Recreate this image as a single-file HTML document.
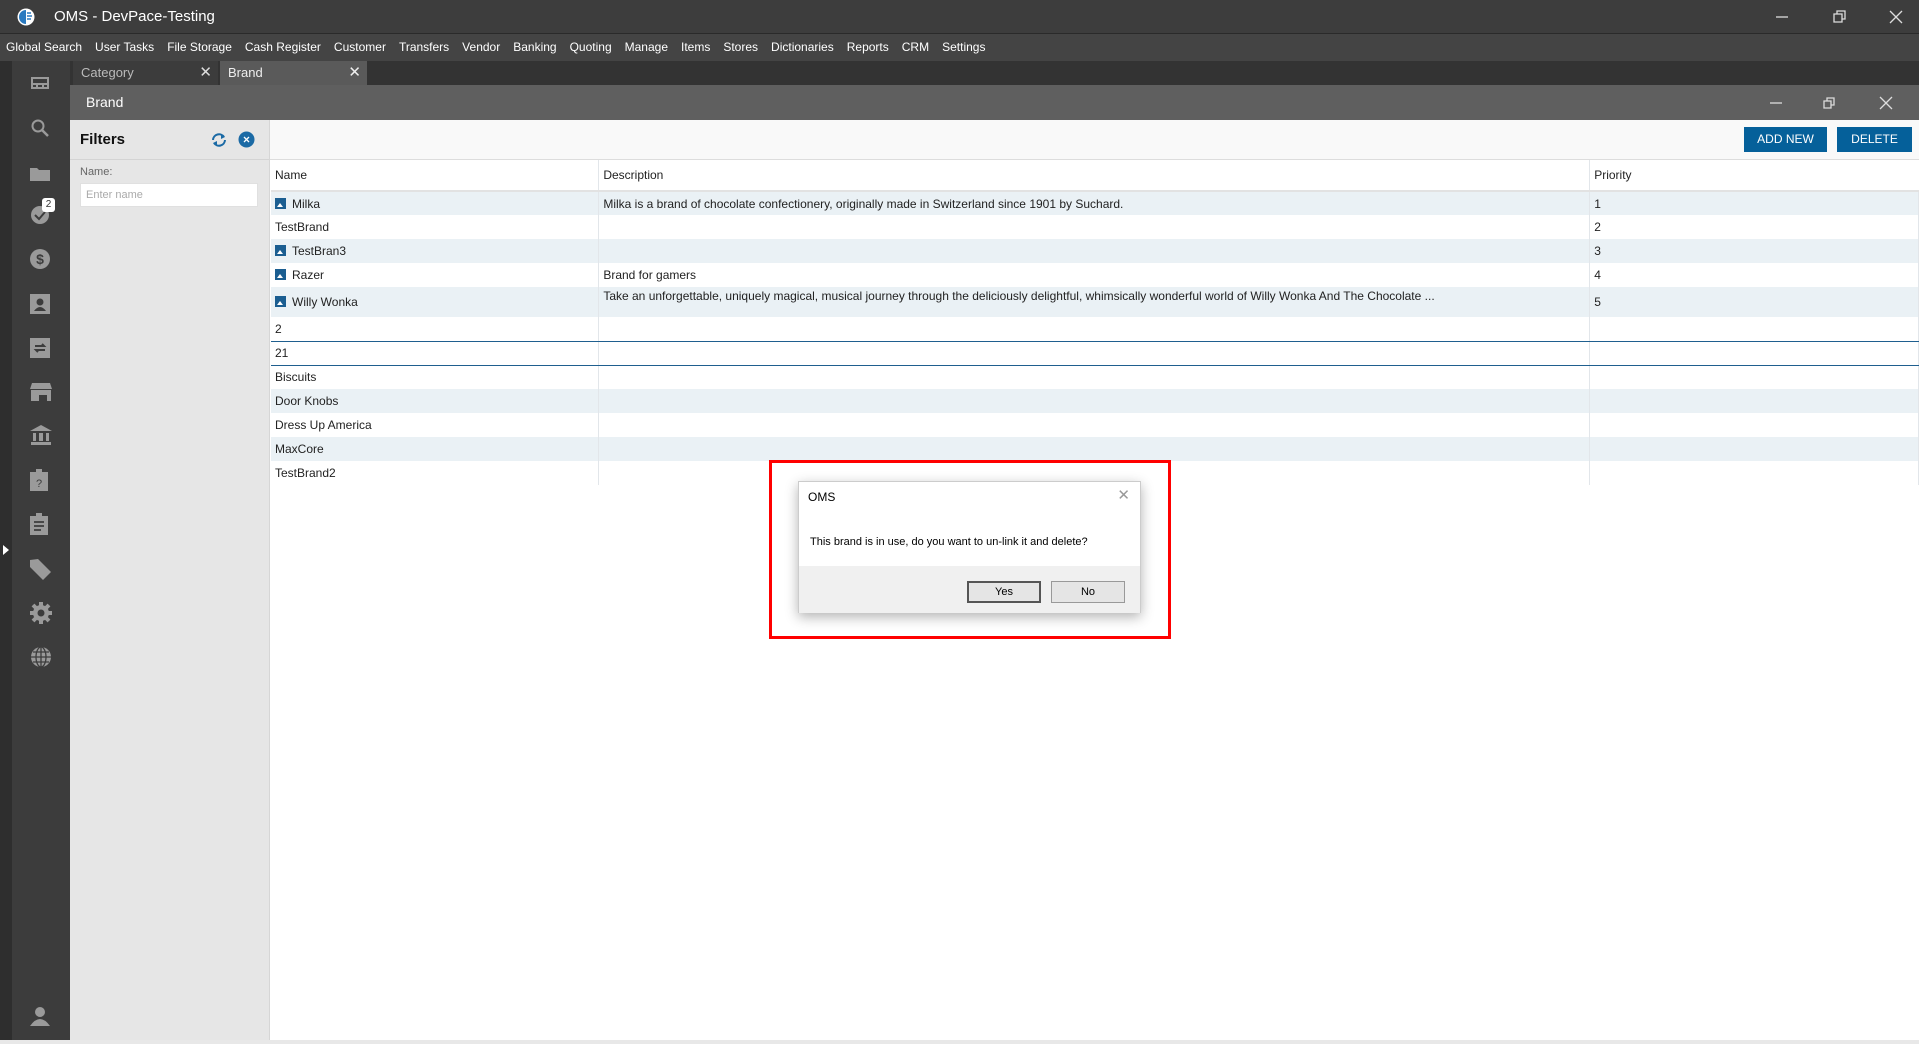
<!DOCTYPE html>
<html><head><meta charset="utf-8"><style>
*{margin:0;padding:0;box-sizing:border-box}
body{width:1919px;height:1044px;overflow:hidden;background:#fff;font-family:"Liberation Sans",sans-serif;position:relative}
.abs{position:absolute}
.title{left:0;top:0;width:1919px;height:34px;background:#3d3d3d;border-bottom:1px solid #2a2a2a;color:#fff;font-size:15px}
.menu{left:0;top:34px;width:1919px;height:27px;background:#444;color:#fff;font-size:12px;line-height:27px;white-space:nowrap;padding-left:6px;word-spacing:0}
.menu span{margin-right:13px}
.side0{left:0;top:61px;width:12px;height:979px;background:#2e2e2e}
.side{left:12px;top:61px;width:58px;height:979px;background:#3c3c3c}
.tabs{left:70px;top:61px;width:1849px;height:24px;background:#333}
.tab{top:0;height:24px;color:#ddd;font-size:13px;line-height:24px;padding-left:8px}
.hdr{left:70px;top:85px;width:1849px;height:35px;background:#5f5f5f;color:#fff;font-size:14px;line-height:35px;padding-left:16px}
.filt{left:70px;top:120px;width:200px;height:920px;background:#e6e6e6;border-right:1px solid #d6d6d6}
.tool{left:270px;top:120px;width:1649px;height:40px;background:#f9f9f9;border-bottom:1px solid #ddd}
.btn{top:127px;height:25px;background:#05609a;color:#fff;font-size:12px;line-height:25px;text-align:center}
table{position:absolute;left:271px;top:160px;border-collapse:collapse;font-size:12px;color:#222}
td{height:24px;padding-left:4px;border-right:1px solid #e2e6ea;white-space:nowrap;vertical-align:middle}
tr.h td{height:31px;border-bottom:2px solid #e2e2e2;background:#fff}
tr.s td{background:#eaf1f5}
.ic{display:inline-block;width:11px;height:11px;background:#1b5e91;margin-right:6px;vertical-align:-1px;position:relative}
.ic:after{content:"";position:absolute;left:2px;bottom:2px;border-left:3px solid transparent;border-right:3px solid transparent;border-bottom:4px solid #fff}
svg.i{position:absolute;left:18px;fill:#9a9a9a}
</style></head><body>
<div class="abs title">
<svg class="abs" style="left:17px;top:8px" width="18" height="18" viewBox="0 0 18 18"><circle cx="9" cy="9" r="8.5" fill="#fff"/><path d="M9 2a7 7 0 0 0 0 14z" fill="#2a7ac0"/><path d="M10 5h4M10 8h5M10 11h4" stroke="#2a7ac0" stroke-width="1.5"/></svg>
<span class="abs" style="left:54px;top:8px">OMS - DevPace-Testing</span>
<svg class="abs" style="left:1776px;top:10px" width="140" height="14"><path d="M0 7h12" stroke="#ddd" stroke-width="1.3"/><path d="M58 4h8v8h-8zM61 4v-3h8v8h-3" stroke="#ddd" fill="none" stroke-width="1.3"/><path d="M114 1l12 12M126 1l-12 12" stroke="#ddd" stroke-width="1.3"/></svg>
</div>
<div class="abs menu"><span>Global Search</span><span>User Tasks</span><span>File Storage</span><span>Cash Register</span><span>Customer</span><span>Transfers</span><span>Vendor</span><span>Banking</span><span>Quoting</span><span>Manage</span><span>Items</span><span>Stores</span><span>Dictionaries</span><span>Reports</span><span>CRM</span><span>Settings</span></div>
<div class="abs side0"></div>
<div class="abs side">
<svg class="i" style="top:15px" width="20" height="14"><path d="M1 1h18v12H1z M3 3v4h14V3z M3 9v2h3V9z M8 9v2h4V9z M14 9v2h3V9z" fill-rule="evenodd"/></svg>
<svg class="i" style="top:57px" width="20" height="20"><circle cx="8" cy="8" r="5.5" fill="none" stroke="#9a9a9a" stroke-width="2"/><path d="M12 12l6 6" stroke="#9a9a9a" stroke-width="2.5"/></svg>
<svg class="i" style="top:104px" width="20" height="16"><path d="M0 3h7l2 2h11v11H0z"/></svg>
<svg class="i" style="top:142px" width="22" height="22"><circle cx="10" cy="12" r="9"/><path d="M5 12l4 4 6-7" stroke="#3c3c3c" stroke-width="2" fill="none"/></svg>
<div class="abs" style="left:30px;top:137px;width:13px;height:14px;background:#fff;border-radius:3px;font-size:10px;color:#333;text-align:center;line-height:14px">2</div>
<svg class="i" style="top:188px" width="20" height="20"><circle cx="10" cy="10" r="10"/><text x="10" y="15" font-size="14" font-weight="bold" text-anchor="middle" fill="#3c3c3c" font-family="Liberation Sans">$</text></svg>
<svg class="i" style="top:233px" width="20" height="20"><path d="M0 0h20v20H0z"/><circle cx="10" cy="8" r="3.5" fill="#3c3c3c"/><path d="M4 17q6-8 12 0z" fill="#3c3c3c"/></svg>
<svg class="i" style="top:277px" width="20" height="20"><path d="M0 0h20v20H0z"/><path d="M5 8h9l-2-2M15 12H6l2 2" stroke="#3c3c3c" stroke-width="2" fill="none"/></svg>
<svg class="i" style="top:322px" width="22" height="18"><path d="M2 0h18l2 6H0z M1 7h20v11h-4v-6H9v6H1z"/></svg>
<svg class="i" style="top:364px" width="22" height="20"><path d="M11 0l11 6H0z M1 17h20v3H1z M3 8h3v8H3z M9 8h4v8H9z M16 8h3v8h-3z"/></svg>
<svg class="i" style="top:408px" width="18" height="22"><path d="M0 3h6v-3h6v3h6v19H0z"/><text x="9" y="18" font-size="11" text-anchor="middle" fill="#3c3c3c" font-family="Liberation Sans">?</text></svg>
<svg class="i" style="top:452px" width="18" height="22"><path d="M0 3h6v-3h6v3h6v19H0z"/><path d="M4 9h10M4 13h10M4 17h7" stroke="#3c3c3c" stroke-width="1.8"/></svg>
<svg class="i" style="top:497px" width="22" height="22"><path d="M0 2v7l13 13 8-8L8 1z"/></svg>
<svg class="i" style="top:541px" width="22" height="22"><circle cx="11" cy="11" r="8"/><path d="M11 0v22M0 11h22M3 3l16 16M19 3L3 19" stroke="#9a9a9a" stroke-width="4"/><circle cx="11" cy="11" r="3.5" fill="#3c3c3c"/></svg>
<svg class="i" style="top:585px" width="22" height="22"><circle cx="11" cy="11" r="10"/><path d="M1 11h20M11 1v20M3 6h16M3 16h16" stroke="#3c3c3c" stroke-width="1.3" fill="none"/><ellipse cx="11" cy="11" rx="5" ry="10" stroke="#3c3c3c" stroke-width="1.3" fill="none"/></svg>
<svg class="i" style="top:945px" width="20" height="20"><circle cx="10" cy="6" r="5"/><path d="M0 20q10-14 20 0z"/></svg>
</div>
<svg class="abs" style="left:3px;top:545px" width="6" height="10"><path d="M0 0l6 5-6 5z" fill="#fff"/></svg>
<div class="abs tabs">
<div class="abs tab" style="left:3px;width:145px;background:#3c3c3c;color:#bbb">Category<span class="abs" style="right:6px;top:0;color:#ddd;font-size:15px">✕</span></div>
<div class="abs tab" style="left:150px;width:147px;background:#5a5a5a;color:#eee">Brand<span class="abs" style="right:6px;top:0;color:#eee;font-size:15px">✕</span></div>
</div>
<div class="abs hdr">Brand
<svg class="abs" style="left:1700px;top:11px" width="140" height="14"><path d="M0 7h12" stroke="#ddd" stroke-width="1.3"/><path d="M54 5h7v7h-7zM57 5v-3h7v7h-3" stroke="#ddd" fill="none" stroke-width="1.3"/><path d="M110 1l12 12M122 1l-12 12" stroke="#ddd" stroke-width="1.3"/></svg>
</div>
<div class="abs filt">
<div class="abs" style="left:0;top:0;width:199px;height:40px;border-bottom:1px solid #d4d4d4"></div>
<div class="abs" style="left:10px;top:11px;font-size:15px;font-weight:bold;color:#111">Filters</div>
<svg class="abs" style="left:140px;top:12px" width="18" height="16"><path d="M3 8a6 6 0 0 1 11-3M15 8a6 6 0 0 1-11 3" stroke="#1b6aa5" stroke-width="2" fill="none"/><path d="M11 2l4 3-4 2zM7 14l-4-3 4-2z" fill="#1b6aa5"/></svg>
<svg class="abs" style="left:168px;top:11px" width="17" height="17"><circle cx="8.5" cy="8.5" r="8" fill="#1b6aa5"/><path d="M6 6l5 5M11 6l-5 5" stroke="#fff" stroke-width="1.3"/></svg>
<div class="abs" style="left:10px;top:46px;font-size:11px;color:#666">Name:</div>
<div class="abs" style="left:10px;top:63px;width:178px;height:24px;background:#fff;border:1px solid #e0e0e0;font-size:11px;color:#aaa;line-height:22px;padding-left:5px">Enter name</div>
</div>
<div class="abs tool"></div>
<div class="abs btn" style="left:1744px;width:83px">ADD NEW</div>
<div class="abs btn" style="left:1837px;width:75px">DELETE</div>
<table>
<tr class="h"><td style="width:328px">Name</td><td style="width:991px">Description</td><td style="width:329px;border-right:0">Priority</td></tr>
<tr class="s"><td><span class="ic"></span>Milka</td><td>Milka is a brand of chocolate confectionery, originally made in Switzerland since 1901 by Suchard.</td><td>1</td></tr>
<tr><td>TestBrand</td><td></td><td>2</td></tr>
<tr class="s"><td><span class="ic"></span>TestBran3</td><td></td><td>3</td></tr>
<tr><td><span class="ic"></span>Razer</td><td>Brand for gamers</td><td>4</td></tr>
<tr class="s"><td style="height:30px"><span class="ic"></span>Willy Wonka</td><td style="vertical-align:top;padding-top:2px">Take an unforgettable, uniquely magical, musical journey through the deliciously delightful, whimsically wonderful world of Willy Wonka And The Chocolate ...</td><td>5</td></tr>
<tr><td style="border-bottom:1px solid #1f5f8f">2</td><td style="border-bottom:1px solid #1f5f8f"></td><td style="border-bottom:1px solid #1f5f8f"></td></tr>
<tr><td style="border-bottom:1px solid #1f5f8f">21</td><td style="border-bottom:1px solid #1f5f8f"></td><td style="border-bottom:1px solid #1f5f8f"></td></tr>
<tr><td>Biscuits</td><td></td><td></td></tr>
<tr class="s"><td>Door Knobs</td><td></td><td></td></tr>
<tr><td>Dress Up America</td><td></td><td></td></tr>
<tr class="s"><td>MaxCore</td><td></td><td></td></tr>
<tr><td>TestBrand2</td><td></td><td></td></tr>
</table>
<div class="abs" style="left:769px;top:460px;width:402px;height:179px;border:3px solid #f00"></div>
<div class="abs" style="left:798px;top:481px;width:343px;height:132px;background:#fff;border:1px solid #ccc;box-shadow:0 4px 12px rgba(0,0,0,.3);font-family:'Liberation Sans',sans-serif;font-size:11px;color:#000">
<div class="abs" style="left:9px;top:8px;font-size:12px">OMS</div>
<div class="abs" style="right:10px;top:4px;font-size:15px;color:#999">✕</div>
<div class="abs" style="left:11px;top:54px">This brand is in use, do you want to un-link it and delete?</div>
<div class="abs" style="left:0;top:84px;width:341px;height:47px;background:#f0f0f0"></div>
<div class="abs" style="left:168px;top:99px;width:74px;height:22px;border:2px solid #555;background:#e5e5e5;text-align:center;line-height:18px">Yes</div>
<div class="abs" style="left:252px;top:99px;width:74px;height:22px;border:1px solid #999;background:#e5e5e5;text-align:center;line-height:20px">No</div>
</div>
<div class="abs" style="left:0;top:1040px;width:1919px;height:4px;background:#e8e8e8"></div>
</body></html>
